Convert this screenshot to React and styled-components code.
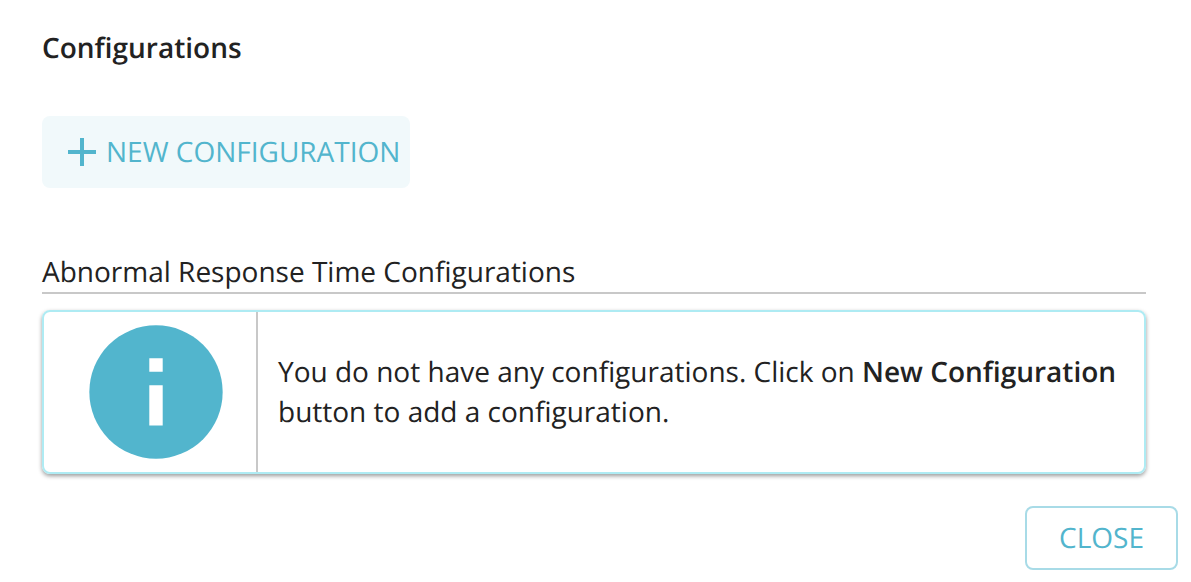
import React from "react";
import styled, { createGlobalStyle } from "styled-components";

const GlobalStyle = createGlobalStyle`
  * { box-sizing: border-box; }
  body {
    margin: 0;
    background: #fff;
    color: #222;
    font-family: "Open Sans", sans-serif;
    font-size: 28px;
    line-height: 40px;
    text-rendering: geometricPrecision;
  }
`;

const Page = styled.main`
  padding: 28px 13px 12px 42px;
`;

const Content = styled.div`
  margin-right: 32px;
`;

const Title = styled.h1`
  margin: 0 0 48px;
  font-size: 28px;
  font-weight: 600;
  line-height: 40px;
`;

const Button = styled.button`
  display: inline-flex;
  align-items: center;
  justify-content: center;
  border-radius: 8px;
  color: #52b5cd;
  font: inherit;
  text-rendering: inherit;
  text-transform: uppercase;
  cursor: pointer;
`;

const NewButton = styled(Button)`
  height: 72px;
  padding: 0 10px 0 26px;
  gap: 10px;
  border: 0;
  background: #f1f9fb;
`;

const CloseButton = styled(Button)`
  height: 64px;
  padding: 0 32px;
  border: 2px solid #a8dbe7;
  background: #fff;
`;

const SectionTitle = styled.h2`
  margin: 64px 0 16px;
  border-bottom: 2px solid #c8c8c8;
  font-size: 28px;
  font-weight: 400;
  line-height: 40px;
`;

const Notice = styled.section`
  display: flex;
  min-height: 164px;
  border: 2px solid #aeebf3;
  border-radius: 8px;
  box-shadow: 0 2px 4px rgba(0, 0, 0, 0.4);
`;

const NoticeIcon = styled.div`
  display: flex;
  flex: none;
  align-items: center;
  justify-content: flex-end;
  width: 214px;
  padding-right: 33px;
  border-right: 2px solid #c8c8c8;
`;

const NoticeText = styled.p`
  align-self: center;
  margin: 0;
  padding: 0 20px;
`;

const Strong = styled.strong`
  font-weight: 600;
`;

const Footer = styled.footer`
  display: flex;
  justify-content: flex-end;
  margin-top: 32px;
`;

function PlusIcon() {
  return (
    <svg width="28" height="28" viewBox="0 0 28 28" aria-hidden="true">
      <path d="M0 14H28M14 0V28" stroke="currentColor" strokeWidth="4" />
    </svg>
  );
}

function InfoIcon() {
  return (
    <svg width="134" height="134" viewBox="0 0 134 134" aria-hidden="true">
      <circle cx="67" cy="67" r="66.67" fill="#52b5cd" />
      <path d="M60.3 33.3H73.7V46.7H60.3ZM60.3 60.3H73.7V100.4H60.3Z" fill="#fff" />
    </svg>
  );
}

export default function App() {
  return (
    <>
      <GlobalStyle />
      <Page>
        <Content>
          <Title>Configurations</Title>
          <NewButton type="button">
            <PlusIcon />
            New Configuration
          </NewButton>
          <SectionTitle>Abnormal Response Time Configurations</SectionTitle>
          <Notice>
            <NoticeIcon>
              <InfoIcon />
            </NoticeIcon>
            <NoticeText>
              You do not have any configurations. Click on <Strong>New Configuration</Strong> button to add a configuration.
            </NoticeText>
          </Notice>
        </Content>
        <Footer>
          <CloseButton type="button">Close</CloseButton>
        </Footer>
      </Page>
    </>
  );
}
